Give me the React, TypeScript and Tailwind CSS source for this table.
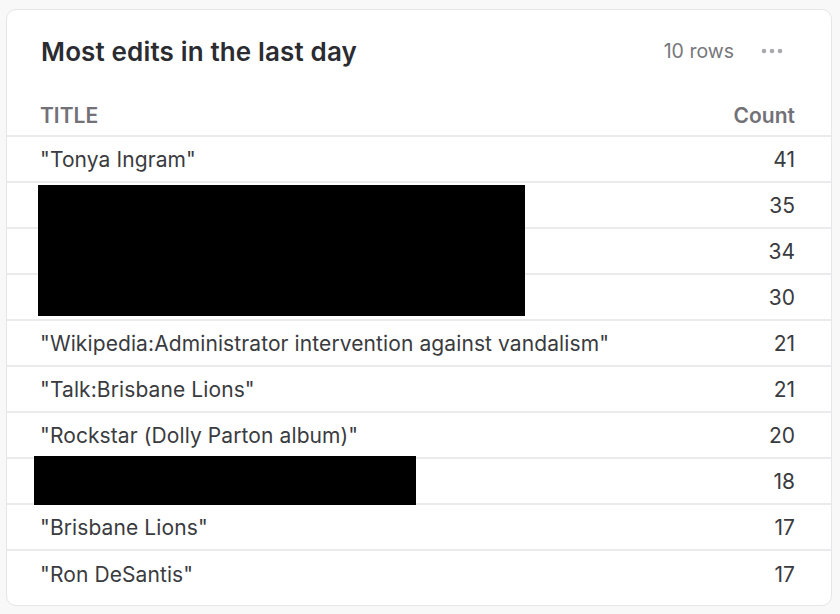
import React from 'react';

interface Row {
  title: string;
  count: number;
}

const rows: Row[] = [
  { title: '"Tonya Ingram"', count: 41 },
  { title: '', count: 35 },
  { title: '', count: 34 },
  { title: '', count: 30 },
  { title: '"Wikipedia:Administrator intervention against vandalism"', count: 21 },
  { title: '"Talk:Brisbane Lions"', count: 21 },
  { title: '"Rockstar (Dolly Parton album)"', count: 20 },
  { title: '', count: 18 },
  { title: '"Brisbane Lions"', count: 17 },
  { title: '"Ron DeSantis"', count: 17 },
];

const App: React.FC = () => {
  return (
    <div
      className="w-[840px] h-[614px] bg-[#f8f8f9] pl-[6px] pt-[9px]"
      style={{ fontFamily: 'Inter, "Noto Sans", sans-serif' }}
    >
      <div className="relative w-[826px] h-[597px] bg-white border border-[#e6e6e8] rounded-[10px] flex flex-col">
        {/* Header */}
        <div className="flex items-center justify-between h-[83px] pl-[34px] pr-[48px]">
          <h2 className="text-[26px] font-semibold text-[#2b2c31] tracking-[0.15px]">
            Most edits in the last day
          </h2>
          <div className="flex items-center gap-[27px]">
            <span className="text-[19.5px] text-[#76777c]">10 rows</span>
            <svg width="22" height="6" viewBox="0 0 22 6" className="mt-[-2px]">
              <circle cx="3" cy="3" r="2.3" fill="#a9aaae" />
              <circle cx="11" cy="3" r="2.3" fill="#a9aaae" />
              <circle cx="19" cy="3" r="2.3" fill="#a9aaae" />
            </svg>
          </div>
        </div>

        {/* Table header */}
        <div className="flex items-center justify-between h-[44px] pl-[33px] pr-[36px] pt-[4px] border-b-2 border-[#ebebed]">
          <span className="text-[21px] font-semibold text-[#717177] uppercase">Title</span>
          <span className="text-[21px] font-semibold text-[#717177]">Count</span>
        </div>

        {/* Rows */}
        {rows.map((row, i) => (
          <div
            key={i}
            className={`flex items-center justify-between h-[46px] pl-[33px] pr-[36px] pt-[1px] text-[21px] text-[#3a3b40] ${
              i < rows.length - 1 ? 'border-b-2 border-[#ebebed]' : ''
            }`}
          >
            <span className="tracking-[0.1px]">{row.title}</span>
            <span>{row.count}</span>
          </div>
        ))}

        {/* Redactions */}
        <div className="absolute left-[31px] top-[175px] w-[487px] h-[131px] bg-black" />
        <div className="absolute left-[27px] top-[446px] w-[382px] h-[49px] bg-black" />
      </div>
    </div>
  );
};

export default App;
